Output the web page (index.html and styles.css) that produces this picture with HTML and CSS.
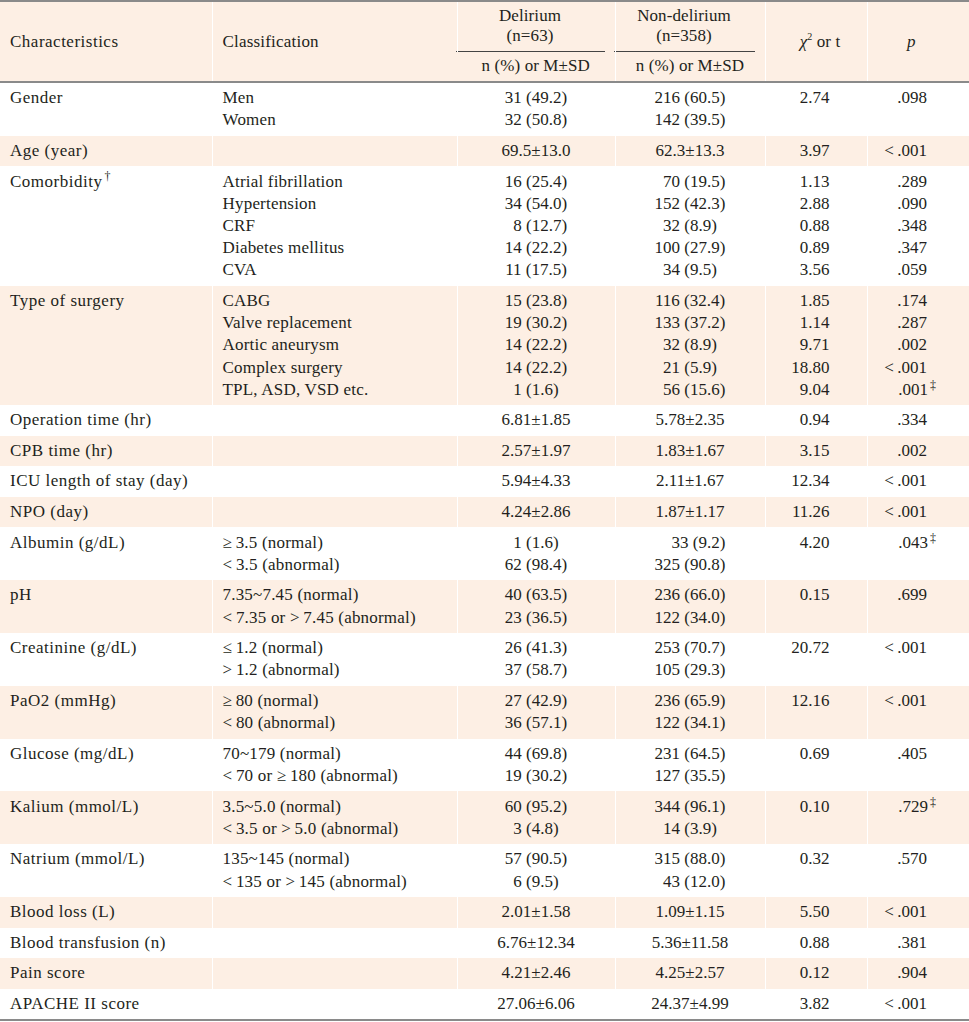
FILE: index.html
```html
<!DOCTYPE html>
<html lang="en">
<head>
<meta charset="utf-8">
<title>Delirium characteristics</title>
<link rel="stylesheet" href="styles.css">
</head>
<body>
<table class="tbl">
  <colgroup>
    <col class="c1"><col class="c2"><col class="c3"><col class="c4"><col class="c5"><col class="c6">
  </colgroup>
  <thead>
    <tr class="h1">
      <th rowspan="2" class="lft first mid">Characteristics</th>
      <th rowspan="2" class="lft mid">Classification</th>
      <th class="grp"><div class="grpin">Delirium<br>(n=63)</div></th>
      <th class="grp"><div class="grpin">Non-delirium<br>(n=358)</div></th>
      <th rowspan="2" class="mid chih"><i>χ</i><sup class="sq">2</sup> or t</th>
      <th rowspan="2" class="mid pcol"><i>p</i></th>
    </tr>
    <tr class="h2">
      <th>n (%) or M±SD</th>
      <th>n (%) or M±SD</th>
    </tr>
  </thead>
  <tbody>
    <tr>
      <td class="lft first">Gender</td>
      <td class="lft"><div>Men</div><div>Women</div></td>
      <td class="ctr"><div>31 (49.2)</div><div>32 (50.8)</div></td>
      <td class="ctr"><div>216 (60.5)</div><div>142 (39.5)</div></td>
      <td class="chi">2.74</td>
      <td class="pv">.098</td>
    </tr>
    <tr class="alt">
      <td class="lft first">Age (year)</td>
      <td class="lft"></td>
      <td class="ctr">69.5±13.0</td>
      <td class="ctr">62.3±13.3</td>
      <td class="chi">3.97</td>
      <td class="pv">&lt;&#8201;.001</td>
    </tr>
    <tr>
      <td class="lft first">Comorbidity<sup class="mark">†</sup></td>
      <td class="lft"><div>Atrial fibrillation</div><div>Hypertension</div><div>CRF</div><div>Diabetes mellitus</div><div>CVA</div></td>
      <td class="ctr"><div>16 (25.4)</div><div>34 (54.0)</div><div>&#8199;8 (12.7)</div><div>14 (22.2)</div><div>11 (17.5)</div></td>
      <td class="ctr"><div>&#8199;70 (19.5)</div><div>152 (42.3)</div><div>&#8199;32 (8.9)&#8199;</div><div>100 (27.9)</div><div>&#8199;34 (9.5)&#8199;</div></td>
      <td class="chi"><div>1.13</div><div>2.88</div><div>0.88</div><div>0.89</div><div>3.56</div></td>
      <td class="pv"><div>.289</div><div>.090</div><div>.348</div><div>.347</div><div>.059</div></td>
    </tr>
    <tr class="alt">
      <td class="lft first">Type of surgery</td>
      <td class="lft"><div>CABG</div><div>Valve replacement</div><div>Aortic aneurysm</div><div>Complex surgery</div><div>TPL, ASD, VSD etc.</div></td>
      <td class="ctr"><div>15 (23.8)</div><div>19 (30.2)</div><div>14 (22.2)</div><div>14 (22.2)</div><div>&#8199;1 (1.6)&#8199;</div></td>
      <td class="ctr"><div>116 (32.4)</div><div>133 (37.2)</div><div>&#8199;32 (8.9)&#8199;</div><div>&#8199;21 (5.9)&#8199;</div><div>&#8199;56 (15.6)</div></td>
      <td class="chi"><div>1.85</div><div>1.14</div><div>9.71</div><div>18.80</div><div>9.04</div></td>
      <td class="pv"><div>.174</div><div>.287</div><div>.002</div><div>&lt;&#8201;.001</div><div>.001<sup class="dag">‡</sup></div></td>
    </tr>
    <tr>
      <td class="lft first">Operation time (hr)</td>
      <td class="lft"></td>
      <td class="ctr">6.81±1.85</td>
      <td class="ctr">5.78±2.35</td>
      <td class="chi">0.94</td>
      <td class="pv">.334</td>
    </tr>
    <tr class="alt">
      <td class="lft first">CPB time (hr)</td>
      <td class="lft"></td>
      <td class="ctr">2.57±1.97</td>
      <td class="ctr">1.83±1.67</td>
      <td class="chi">3.15</td>
      <td class="pv">.002</td>
    </tr>
    <tr>
      <td class="lft first">ICU length of stay (day)</td>
      <td class="lft"></td>
      <td class="ctr">5.94±4.33</td>
      <td class="ctr">2.11±1.67</td>
      <td class="chi">12.34</td>
      <td class="pv">&lt;&#8201;.001</td>
    </tr>
    <tr class="alt">
      <td class="lft first">NPO (day)</td>
      <td class="lft"></td>
      <td class="ctr">4.24±2.86</td>
      <td class="ctr">1.87±1.17</td>
      <td class="chi">11.26</td>
      <td class="pv">&lt;&#8201;.001</td>
    </tr>
    <tr>
      <td class="lft first">Albumin (g/dL)</td>
      <td class="lft"><div>≥&#8201;3.5 (normal)</div><div>&lt;&#8201;3.5 (abnormal)</div></td>
      <td class="ctr"><div>&#8199;1 (1.6)&#8199;</div><div>62 (98.4)</div></td>
      <td class="ctr"><div>&#8199;&#8199;33 (9.2)</div><div>325 (90.8)</div></td>
      <td class="chi">4.20</td>
      <td class="pv">.043<sup class="dag">‡</sup></td>
    </tr>
    <tr class="alt">
      <td class="lft first">pH</td>
      <td class="lft"><div>7.35~7.45 (normal)</div><div>&lt;&#8201;7.35 or &gt;&#8201;7.45 (abnormal)</div></td>
      <td class="ctr"><div>40 (63.5)</div><div>23 (36.5)</div></td>
      <td class="ctr"><div>236 (66.0)</div><div>122 (34.0)</div></td>
      <td class="chi">0.15</td>
      <td class="pv">.699</td>
    </tr>
    <tr>
      <td class="lft first">Creatinine (g/dL)</td>
      <td class="lft"><div>≤&#8201;1.2 (normal)</div><div>&gt;&#8201;1.2 (abnormal)</div></td>
      <td class="ctr"><div>26 (41.3)</div><div>37 (58.7)</div></td>
      <td class="ctr"><div>253 (70.7)</div><div>105 (29.3)</div></td>
      <td class="chi">20.72</td>
      <td class="pv">&lt;&#8201;.001</td>
    </tr>
    <tr class="alt">
      <td class="lft first">PaO2 (mmHg)</td>
      <td class="lft"><div>≥&#8201;80 (normal)</div><div>&lt;&#8201;80 (abnormal)</div></td>
      <td class="ctr"><div>27 (42.9)</div><div>36 (57.1)</div></td>
      <td class="ctr"><div>236 (65.9)</div><div>122 (34.1)</div></td>
      <td class="chi">12.16</td>
      <td class="pv">&lt;&#8201;.001</td>
    </tr>
    <tr>
      <td class="lft first">Glucose (mg/dL)</td>
      <td class="lft"><div>70~179 (normal)</div><div>&lt;&#8201;70 or ≥&#8201;180 (abnormal)</div></td>
      <td class="ctr"><div>44 (69.8)</div><div>19 (30.2)</div></td>
      <td class="ctr"><div>231 (64.5)</div><div>127 (35.5)</div></td>
      <td class="chi">0.69</td>
      <td class="pv">.405</td>
    </tr>
    <tr class="alt">
      <td class="lft first">Kalium (mmol/L)</td>
      <td class="lft"><div>3.5~5.0 (normal)</div><div>&lt;&#8201;3.5 or &gt;&#8201;5.0 (abnormal)</div></td>
      <td class="ctr"><div>60 (95.2)</div><div>&#8199;3 (4.8)&#8199;</div></td>
      <td class="ctr"><div>344 (96.1)</div><div>&#8199;14 (3.9)&#8199;</div></td>
      <td class="chi">0.10</td>
      <td class="pv">.729<sup class="dag">‡</sup></td>
    </tr>
    <tr>
      <td class="lft first">Natrium (mmol/L)</td>
      <td class="lft"><div>135~145 (normal)</div><div>&lt;&#8201;135 or &gt;&#8201;145 (abnormal)</div></td>
      <td class="ctr"><div>57 (90.5)</div><div>&#8199;6 (9.5)&#8199;</div></td>
      <td class="ctr"><div>315 (88.0)</div><div>&#8199;43 (12.0)</div></td>
      <td class="chi">0.32</td>
      <td class="pv">.570</td>
    </tr>
    <tr class="alt">
      <td class="lft first">Blood loss (L)</td>
      <td class="lft"></td>
      <td class="ctr">2.01±1.58</td>
      <td class="ctr">1.09±1.15</td>
      <td class="chi">5.50</td>
      <td class="pv">&lt;&#8201;.001</td>
    </tr>
    <tr>
      <td class="lft first">Blood transfusion (n)</td>
      <td class="lft"></td>
      <td class="ctr">6.76±12.34</td>
      <td class="ctr">5.36±11.58</td>
      <td class="chi">0.88</td>
      <td class="pv">.381</td>
    </tr>
    <tr class="alt">
      <td class="lft first">Pain score</td>
      <td class="lft"></td>
      <td class="ctr">4.21±2.46</td>
      <td class="ctr">4.25±2.57</td>
      <td class="chi">0.12</td>
      <td class="pv">.904</td>
    </tr>
    <tr>
      <td class="lft first">APACHE II score</td>
      <td class="lft"></td>
      <td class="ctr">27.06±6.06</td>
      <td class="ctr">24.37±4.99</td>
      <td class="chi">3.82</td>
      <td class="pv">&lt;&#8201;.001</td>
    </tr>
  </tbody>
</table>
</body>
</html>
```
FILE: styles.css
```css
body {
  margin: 0;
  background: #ffffff;
  font-family: "Liberation Serif", "Times New Roman", serif;
  font-size: 17px;
  color: #231f20;
}

.tbl {
  width: 969px;
  border-collapse: collapse;
  table-layout: fixed;
  border-top: 2px solid #8a8a8a;
  border-bottom: 2px solid #8a8a8a;
}

.c1 { width: 212px; }
.c2 { width: 245px; }
.c3 { width: 158px; }
.c4 { width: 150px; }
.c5 { width: 102px; }
.c6 { width: 102px; }

.tbl th,
.tbl td {
  padding: 4.2px 0;
  line-height: 22.2px;
  vertical-align: top;
  border-left: 1px solid #ffffff;
  font-weight: normal;
}

.tbl th:first-child,
.tbl td:first-child {
  border-left: none;
}

thead th {
  background: #fdefe4;
  text-align: center;
  letter-spacing: 0.1px;
}

thead {
  border-bottom: 2px solid #8a8a8a;
}

.h1 th {
  padding: 4px 0 0;
  line-height: 20px;
}

.h1 th.mid {
  vertical-align: middle;
  padding: 0;
}

.grpin {
  border-bottom: 1px solid #444;
  margin: 0 10px 0 -2px;
  padding-bottom: 5px;
}

.h2 th {
  padding: 4px 0 5px;
  line-height: 20px;
}

.lft {
  text-align: left;
  padding-left: 10px !important;
  letter-spacing: 0.2px;
}

.first {
  letter-spacing: 0.5px;
}

.ctr {
  text-align: center;
}

.chi {
  text-align: right;
  padding-right: 37px !important;
}

.chih {
  padding-left: 8px !important;
}

.pv {
  text-align: right;
  padding-right: 42px !important;
}

.pcol {
  padding-right: 14px !important;
}

.alt td {
  background: #fdefe4;
}

.mark {
  font-size: 12px;
  line-height: 0;
  vertical-align: 7px;
  margin-left: 2px;
}

.dag {
  font-size: 12px;
  line-height: 0;
  vertical-align: 6px;
  margin-left: 2px;
  margin-right: -9px;
}

.sq {
  font-size: 10px;
  line-height: 0;
  vertical-align: 7px;
}
```
